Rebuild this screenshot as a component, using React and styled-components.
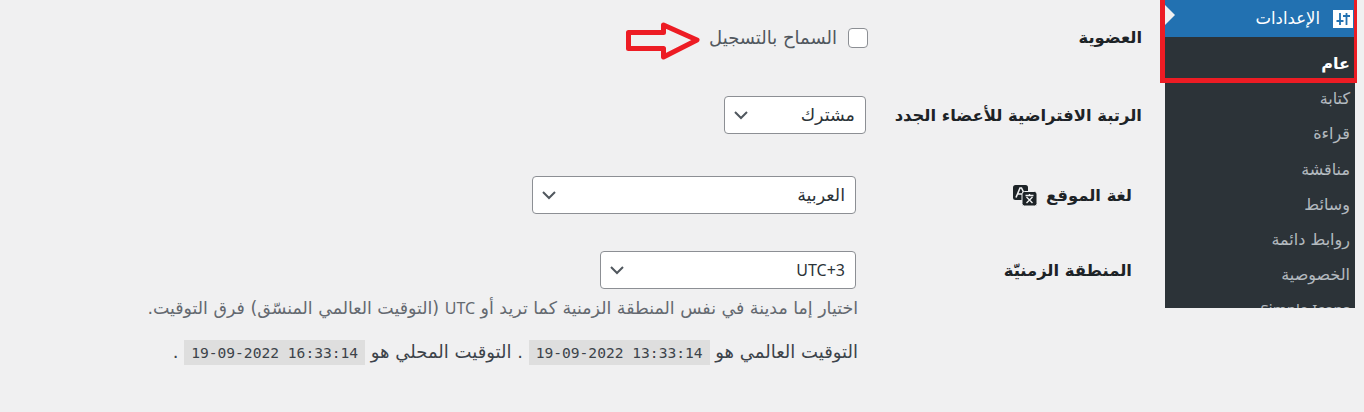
import React from "react";
import styled, { createGlobalStyle } from "styled-components";

const Global = createGlobalStyle`
  html, body { margin: 0; padding: 0; background: #f0f0f1; }
  body { font-family: "DejaVu Sans", "Noto Sans", sans-serif; color: #3c434a; font-size: 14px; }
  * { box-sizing: border-box; }
`;

const Page = styled.div`
  direction: rtl;
  position: relative;
  width: 1364px;
  height: 412px;
  overflow: hidden;
  display: flex;
  align-items: flex-start;
  padding-right: 9px;
`;

const Side = styled.nav`
  width: 190px;
  height: 308px;
  flex: none;
  background: #2c3338;
  overflow: hidden;
  position: relative;
`;

const Current = styled.div`
  height: 37px;
  background: #2271b1;
  color: #fff;
  display: flex;
  align-items: center;
  gap: 13px;
  padding-right: 2px;
  font-size: 16.5px;
  position: relative;
`;

const Pointer = styled.span`
  position: absolute;
  left: 0;
  top: 5px;
  width: 0;
  height: 0;
  border-top: 10px solid transparent;
  border-bottom: 10px solid transparent;
  border-left: 10px solid #f0f0f1;
`;

const SubList = styled.ul`
  list-style: none;
  margin: 0;
  padding: 9px 0 0;
`;

const SubItem = styled.li`
  height: 35.2px;
  line-height: 35px;
  padding-right: 5px;
  font-size: 16px;
  white-space: nowrap;
  color: ${(p) => (p.$on ? "#fff" : "rgba(240,246,252,.7)")};
  font-weight: ${(p) => (p.$on ? 700 : 400)};
`;

const Content = styled.main`
  flex: 1;
  padding: 0 23px 0 0;
`;

const Row = styled.div`
  display: grid;
  grid-template-columns: 276px 1fr;
  align-items: center;
  height: ${(p) => p.$h}px;
  margin-top: ${(p) => p.$top || 0}px;
  padding-right: ${(p) => p.$in || 0}px;
`;

const Label = styled.label`
  font-size: 16.4px;
  font-weight: 700;
  color: #1d2327;
  display: flex;
  align-items: center;
  gap: 9px;
`;

const CheckLine = styled.div`
  display: flex;
  align-items: center;
  gap: 11px;
  margin-right: -2px;
  font-size: 18px;
  color: #50575e;
`;

const Check = styled.span`
  width: 20px;
  height: 20px;
  border: 1px solid #8c8f94;
  border-radius: 4px;
  background: #fff;
  flex: none;
`;

const Select = styled.div`
  width: ${(p) => p.$w}px;
  height: 38px;
  background: #fff;
  border: 1px solid #8c8f94;
  border-radius: 4px;
  display: flex;
  align-items: center;
  justify-content: space-between;
  padding: 0 10px 0 8px;
  font-size: 17.5px;
  color: #2c3338;
`;

const Latin = styled.span`
  font-family: "Noto Sans", sans-serif;
  font-size: ${(p) => p.$size || 15}px;
`;

const Desc = styled.p`
  margin: 7px 0 0;
  font-size: 17.4px;
  color: #646970;
  height: 24px;
  line-height: 24px;
  white-space: nowrap;
`;

const TimeLine = styled.p`
  margin: 19px 0 0;
  font-size: 18px;
  color: #3c434a;
  height: 26px;
  line-height: 26px;
  white-space: nowrap;
`;

const Code = styled.code`
  font-family: "DejaVu Sans Mono", "Liberation Mono", monospace;
  font-size: 14.6px;
  background: #dedede;
  padding: 4px 7px;
  direction: ltr;
  unicode-bidi: embed;
`;

const Notes = styled.div`
  padding-right: 276px;
  margin-right: 8px;
`;

const Frame = styled.div`
  position: absolute;
  left: 1160px;
  top: -5px;
  width: 197px;
  height: 88px;
  border: 5px solid #ed1c24;
  border-right-width: 3px;
  pointer-events: none;
`;

const ArrowMark = styled.svg`
  position: absolute;
  left: 626px;
  top: 21px;
`;

const Chevron = () => (
  <svg width="16" height="16" viewBox="0 0 16 16" fill="none" stroke="#50575e" strokeWidth="2">
    <path d="M2 5l6 6 6-6" />
  </svg>
);

const SettingsIcon = () => (
  <svg width="20" height="18" viewBox="0 0 20 18">
    <rect width="20" height="18" fill="#fff" />
    <path d="M7 3v12M13.500 3v12M3.500 11h7M10 6h7" stroke="#2271b1" strokeWidth="1.8" fill="none" />
  </svg>
);

const LangIcon = () => (
  <svg width="24" height="21" viewBox="0 0 24 21">
    <rect x="0" y="0" width="15" height="15" rx="2.500" fill="#1d2327" />
    <path d="M3 12.500L7 3h1.500L11 8M5 9h4" stroke="#f0f0f1" strokeWidth="1.6" fill="none" />
    <rect x="9" y="6.500" width="15" height="14.500" rx="2.500" fill="#1d2327" stroke="#f0f0f1" strokeWidth="1" />
    <path d="M12.500 10.500h8M16.500 9v2M13.500 18l6-6M19.500 18l-6-6" stroke="#f0f0f1" strokeWidth="1.4" fill="none" />
  </svg>
);

const subs = ["كتابة", "قراءة", "مناقشة", "وسائط", "روابط دائمة", "الخصوصية"];

export default function App() {
  return (
    <Page>
      <Global />
      <Side>
        <Current>
          <SettingsIcon />
          <span>الإعدادات</span>
          <Pointer />
        </Current>
        <SubList>
          <SubItem $on>عام</SubItem>
          {subs.map((s) => (
            <SubItem key={s}>{s}</SubItem>
          ))}
          <SubItem><Latin>Simple Icons</Latin></SubItem>
        </SubList>
      </Side>
      <Content>
        <Row $h={75}>
          <Label>العضوية</Label>
          <CheckLine>
            <Check />
            <span>السماح بالتسجيل</span>
          </CheckLine>
        </Row>
        <Row $h={80}>
          <Label>الرتبة الافتراضية للأعضاء الجدد</Label>
          <Select $w={142}>
            <span>مشترك</span>
            <Chevron />
          </Select>
        </Row>
        <Row $h={80} $in={10}>
          <Label>
            لغة الموقع
            <LangIcon />
          </Label>
          <Select $w={324}>
            <span>العربية</span>
            <Chevron />
          </Select>
        </Row>
        <Row $h={38} $top={16} $in={10}>
          <Label>المنطقة الزمنيّة</Label>
          <Select $w={256}>
            <Latin $size={16}>UTC+3</Latin>
            <Chevron />
          </Select>
        </Row>
        <Notes>
          <Desc>اختيار إما مدينة في نفس المنطقة الزمنية كما تريد أو <Latin $size={16}>UTC</Latin> (التوقيت العالمي المنسّق) فرق التوقيت.</Desc>
          <TimeLine>
            التوقيت العالمي هو <Code>19-09-2022 13:33:14</Code> . التوقيت المحلي هو <Code>19-09-2022 16:33:14</Code> .
          </TimeLine>
        </Notes>
      </Content>
      <Frame />
      <ArrowMark width="76" height="40" viewBox="0 0 76 40">
        <path d="M2.500 11.500h35V4L71 19 37.500 36v-8.500h-35z" fill="none" stroke="#ed1c24" strokeWidth="5" strokeLinejoin="round" />
      </ArrowMark>
    </Page>
  );
}
